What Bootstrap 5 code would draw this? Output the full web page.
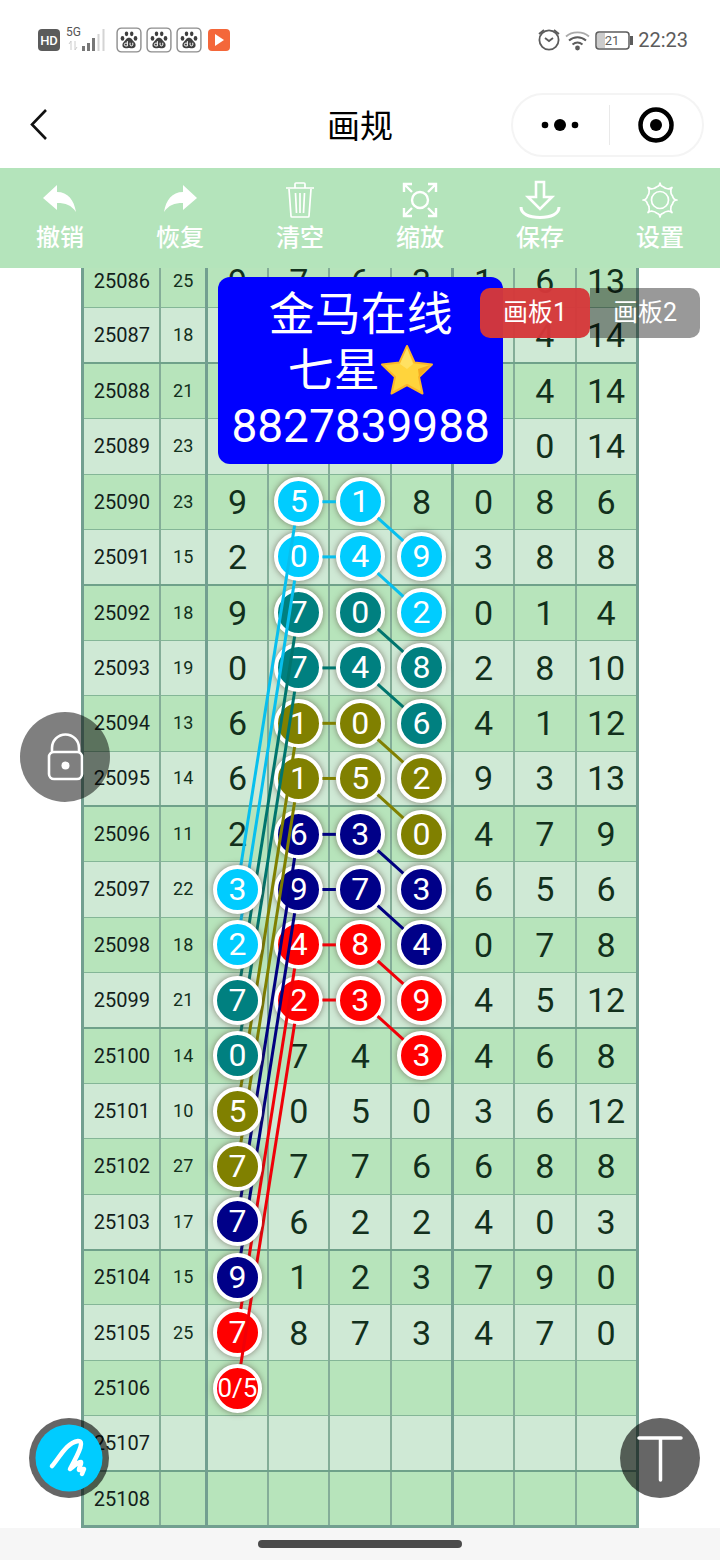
<!DOCTYPE html>
<html lang="zh-CN">
<head>
<meta charset="utf-8">
<meta name="viewport" content="width=device-width, initial-scale=1">
<title>画规</title>
<link href="https://cdn.jsdelivr.net/npm/bootstrap@5.3.0/dist/css/bootstrap.min.css" rel="stylesheet">
<style>
  body { font-family: Roboto, "Noto Sans CJK SC", sans-serif; background: #fff; color: #000; }
  svg { display: block; }
  button { font-family: inherit; }
  .status-bar { height: 80px; padding: 0 32px 0 38px; color: #5c5c5c; }
  .status-time { font-size: 20px; line-height: 24px; }
  .title-bar { height: 88px; padding: 2px 16px 0; }
  .title-text { font-size: 33px; line-height: 40px; font-weight: 400; padding-top: 4px; }
  .side-slot { width: 193px; }
  .capsule { height: 64px; border: 2px solid #f4f4f4; border-radius: 32px; }
  .capsule-rule { width: 1px; height: 40px; background: #e9e9e9; }
  .plain-btn { border: 0; background: none; padding: 0; color: inherit; }
  .tool-bar { height: 100px; background: #b4e4bb; }
  .tool-bar button { color: #fff; font-size: 24px; line-height: 28px; font-weight: 500; flex: 1 1 0; padding-bottom: 4px; gap: 4px; }
  .stage { min-height: 0; }
  .sheet { width: 77.4%; margin-top: -17px; }
  .draw-grid { table-layout: fixed; border-collapse: collapse; color: #12301c; font-size: 34px; line-height: 40px; border: 3px solid #729f90; }
  .draw-grid td, .draw-grid th { padding: 0; font-weight: 400; border: 1px solid #84b697; border-right: 2px solid #84ad98; border-left: 2px solid #84ad98; }
  .draw-grid tr { background: #cfe9d5; height: 55px; }
  .draw-grid tr:nth-child(odd) { background: #b7e4bb; }
  .draw-grid tr:nth-child(4n+2) > * { border-bottom: 2px solid #6fa18a; }
  .draw-grid .edge { border-right: 3px solid #729f90; }
  .draw-grid .issue { width: 14%; font-size: 20px; color: #12201a; }
  .draw-grid .total { width: 8.3%; font-size: 18px; }
  .chip { width: 49px; height: 49px; margin: -4px auto; border: 4px solid #fff; border-radius: 50%; color: #fff; font-size: 32px; line-height: 41px; position: relative; z-index: 1; box-shadow: 0 0 6px rgba(80,60,50,.6); overflow: hidden; }
  .chip.over { z-index: 3; }
  .chip.tight { font-size: 26px; }
  .links { z-index: 2; pointer-events: none; fill: none; stroke-width: 3; }
  .c-sky { background: #00ccff; } .c-teal { background: #008080; } .c-olive { background: #808000; }
  .c-navy { background: #000088; } .c-red { background: #ff0000; }
  .note { left: 30.3%; top: 9px; width: 285px; padding: 9px 0 10px; background: #0000ff; color: #fff; border-radius: 12px; font-size: 46px; line-height: 56px; z-index: 4; }
  .boards { right: 20px; top: 20px; z-index: 5; }
  .boards button { width: 110px; height: 50px; border: 0; color: #fff; font-size: 25px; line-height: 30px; background: rgba(0,0,0,.4); border-radius: 0 10px 10px 0; padding: 0; }
  .boards .active { background: rgba(213,56,58,.97); border-radius: 10px; }
  .round { z-index: 5; border: 0; border-radius: 50%; padding: 0; width: 80px; height: 80px; }
  .round-lock { width: 90px; height: 90px; left: 20px; top: 444px; background: rgba(0,0,0,.5); }
  .round-pen { left: 29px; bottom: 30px; background: rgba(0,0,0,.6); }
  .round-text { right: 20px; bottom: 30px; background: rgba(0,0,0,.6); }
  .home-bar { height: 32px; background: #f6f6f6; }
  .home-pill { width: 204px; height: 8px; border-radius: 4px; background: #4b4b4b; }
</style>
</head>
<body class="d-flex flex-column vh-100 overflow-hidden">

<svg class="d-none">
  <symbol id="paw" viewBox="0 0 24 24">
    <rect x="1" y="1" width="22" height="22" rx="4" fill="#fff" stroke="#8d8d8d" stroke-width="1.3"/>
    <g fill="#3f3f3f"><ellipse cx="6" cy="10.600" rx="1.700" ry="2.200"/><ellipse cx="9.700" cy="6.300" rx="1.600" ry="2.200"/><ellipse cx="14.500" cy="6.300" rx="1.600" ry="2.200"/><ellipse cx="18" cy="10.600" rx="1.700" ry="2.200"/>
    <path d="M12 10c-2.500 0-3 2.200-4.600 3.600-2.600 2.400-1.500 6 1.400 6 1.500 0 2-.3 3.200-.3s1.800.3 3.200.3c3 0 4-3.600 1.400-6C15 12.200 14.500 10 12 10z"/></g>
    <path d="M10.500 13v4.500h-1.500a1.300 1.300 0 010-2.600h1.500M13 14.500v2c0 1.300 2.500 1.300 2.500 0v-2" fill="none" stroke="#fff" stroke-width=".9"/>
  </symbol>
</svg>

<header class="status-bar d-flex align-items-center justify-content-between flex-shrink-0">
  <div class="d-flex align-items-center">
    <svg width="70" height="26" viewBox="0 0 70 26">
      <rect x="0" y="2" width="22" height="22" rx="4" fill="#5b5b5b"/>
      <text x="11" y="18" font-size="13" font-weight="500" fill="#fff" text-anchor="middle">HD</text>
      <text x="28" y="9" font-size="12" fill="#555">5G</text>
      <path d="M33 14v9M33 14l-2 3M37 14v9M37 23l2-3" stroke="#ccc" fill="none"/>
      <path d="M45.500 19v5M50.500 16v8M55.500 11v13" stroke="#777" stroke-width="3"/>
      <path d="M60.500 7v17M65.500 2v22" stroke="#d4d4d4" stroke-width="2"/>
    </svg>
    <svg class="ms-2" width="26" height="26"><use href="#paw"/></svg>
    <svg class="ms-1" width="26" height="26"><use href="#paw"/></svg>
    <svg class="ms-1" width="26" height="26"><use href="#paw"/></svg>
    <svg class="ms-1" width="26" height="26" viewBox="0 0 26 26"><rect x="2" y="2" width="22" height="22" rx="4" fill="#f4673a"/><path d="M9 7l9 6-9 6z" fill="#fff"/></svg>
  </div>
  <div class="d-flex align-items-center">
    <svg width="97" height="26" viewBox="0 0 97 26" fill="none" stroke="#5c5c5c" stroke-width="1.800">
      <circle cx="12" cy="13" r="9.600"/><path d="M8 11l4 3 4-3M2 7l5-4M22 7l-5-4"/>
      <path d="M29 9.500c6-5.500 17-5.500 23 0" stroke="#aaa"/><path d="M32 13.500c5-4.500 12-4.500 17 0M35.500 17.500c3-2.500 7-2.500 10 0" stroke-width="2"/><circle cx="40.500" cy="21" r="1.500" fill="#5c5c5c"/>
      <rect x="60" y="6" width="8" height="15" fill="#ccc" stroke="none"/>
      <rect x="59" y="5" width="33" height="17" rx="3" stroke-width="1.500"/><path d="M94.500 9v9" stroke-width="3"/>
      <text x="75" y="18" font-size="13" fill="#5c5c5c" stroke="none" text-anchor="middle">21</text>
    </svg>
    <span class="status-time ms-1">22:23</span>
  </div>
</header>

<nav class="title-bar d-flex align-items-center justify-content-between flex-shrink-0">
  <div class="side-slot"><button class="plain-btn ps-2 pt-1" aria-label="返回"><svg width="30" height="36" viewBox="0 0 30 36" fill="none" stroke="#111" stroke-width="2.600"><path d="M22 4L8 18.500 22 33"/></svg></button></div>
  <h1 class="title-text m-0">画规</h1>
  <div class="side-slot capsule d-flex align-items-center">
    <button class="plain-btn flex-fill d-flex justify-content-center" aria-label="更多"><svg width="40" height="14" viewBox="0 0 40 14"><circle cx="4" cy="7" r="3.300"/><circle cx="19" cy="7" r="6"/><circle cx="34" cy="7" r="3.300"/></svg></button>
    <span class="capsule-rule"></span>
    <button class="plain-btn flex-fill d-flex justify-content-center" aria-label="关闭"><svg width="36" height="36" viewBox="0 0 36 36"><circle cx="18" cy="18" r="15.500" fill="none" stroke="#000" stroke-width="4.500"/><circle cx="18" cy="18" r="6"/></svg></button>
  </div>
</nav>

<div class="tool-bar d-flex flex-shrink-0" role="toolbar">
  <button class="plain-btn d-flex flex-column align-items-center justify-content-center"><svg width="40" height="40" viewBox="0 0 40 40" fill="#fff"><path d="M3 18L17 5v7c11 0 17 8 19 20-5-7-10-9-19-9v7z"/></svg>撤销</button>
  <button class="plain-btn d-flex flex-column align-items-center justify-content-center"><svg width="40" height="40" viewBox="0 0 40 40" fill="#fff"><path d="M37 18L23 5v7C12 12 6 20 4 32c5-7 10-9 19-9v7z"/></svg>恢复</button>
  <button class="plain-btn d-flex flex-column align-items-center justify-content-center"><svg width="40" height="40" viewBox="0 0 40 40" fill="none" stroke="#fff" stroke-width="1.700"><path d="M6 8h28M15 8V4q0-1 1-1h8q1 0 1 1v4M9 9l2 27q0 1 1 1h16q1 0 1-1l2-27M15.500 13l1 20M20 13v20M24.500 13l-1 20"/></svg>清空</button>
  <button class="plain-btn d-flex flex-column align-items-center justify-content-center"><svg width="40" height="40" viewBox="0 0 40 40" fill="none" stroke="#fff" stroke-width="2.400"><circle cx="20" cy="20" r="8"/><path d="M4 12V4h8M4 4l8 8M28 4h8v8M36 4l-8 8M4 28v8h8M4 36l8-8M36 28v8h-8M36 36l-8-8"/></svg>缩放</button>
  <button class="plain-btn d-flex flex-column align-items-center justify-content-center"><svg width="44" height="40" viewBox="0 0 44 40" fill="none" stroke="#fff" stroke-width="2.600"><path d="M18 2h8v15h8L22 29 10 17h8z"/><path d="M3 27c0 7 8 10.500 19 10.500S41 34 41 27" stroke-width="3"/></svg>保存</button>
  <button class="plain-btn d-flex flex-column align-items-center justify-content-center"><svg width="40" height="40" viewBox="0 0 40 40" fill="none" stroke="#fff" stroke-width="1.700" stroke-linejoin="round"><circle cx="20" cy="20" r="8.500"/><path d="M16.500 7q3.500-1 3.500-4 0 3 3.500 4 2 1.500 3 1.500 3 1 5.500-1-2 2.500-1 5.500 0 1 1.500 3 1 4 4.500 4-3.500 0-4.500 4-1.500 2-1.500 3-1 3 1 5.500-2.500-2-5.500-1-1 0-3 1.500-3.500 1-3.500 4 0-3-3.500-4-2-1.500-3-1.500-3-1-5.500 1 2-2.500 1-5.500 0-1-1.500-3-1-4-4.500-4 3.500 0 4.500-4 1.500-2 1.500-3 1-3-1-5.500 2.500 2 5.500 1 1 0 3-1.500z"/></svg>设置</button>
</div>

<main class="stage position-relative flex-grow-1 d-flex justify-content-center overflow-hidden">
  <div class="sheet position-relative">
    <table class="draw-grid w-100 h-100 text-center align-middle"><tbody id="rows"></tbody></table>
    <svg id="links" class="links position-absolute top-0 start-0 w-100 h-100"></svg>
  </div>

  <div class="note position-absolute text-center">
    <div>金马在线</div>
    <div class="d-flex justify-content-center align-items-center">七星<svg width="54" height="54" viewBox="0 0 54 54"><path d="M27 3l7.500 16.500L52 21.500 39 34l3.500 16.500L27 42l-15.500 8.500L15 34 2 21.500l17.500-2z" fill="#ffd43c" stroke="#fbb52a" stroke-width="2" stroke-linejoin="round"/><path d="M27 5l6 16-6 5-7-5z" fill="#ffe162"/><path d="M50 22L38 26l1 8z" fill="#f5ab1f"/></svg></div>
    <div>8827839988</div>
  </div>

  <div class="boards position-absolute d-flex"><button class="active">画板1</button><button>画板2</button></div>

  <button class="round round-lock position-absolute" aria-label="锁定"><svg width="90" height="90" viewBox="0 0 90 90" fill="none" stroke="#fff" stroke-width="2.600"><rect x="29" y="40" width="33" height="27" rx="5"/><path d="M32 40v-4a13.500 13.500 0 0127 0v4"/><circle cx="45.500" cy="53.500" r="4" fill="#fff" stroke="none"/></svg></button>
  <button class="round round-pen position-absolute" aria-label="画笔"><svg width="80" height="80" viewBox="0 0 80 80"><circle cx="40" cy="40" r="33.500" fill="#00ccff"/><path d="M23 48C31 39 37 25 49 23c6 0 3 8-8 28 5-3 7-7 11-7 1 2-3 7-2 8l5-1-2 5" fill="none" stroke="#fff" stroke-width="4.500" stroke-linecap="round" stroke-linejoin="round"/></svg></button>
  <button class="round round-text position-absolute" aria-label="文字"><svg width="80" height="80" viewBox="0 0 80 80" fill="none" stroke="#fff" stroke-width="3.500" stroke-linecap="round"><path d="M19 20h42M40.500 20v42"/></svg></button>
</main>

<footer class="home-bar d-flex align-items-center justify-content-center flex-shrink-0"><span class="home-pill"></span></footer>

<script src="https://cdn.jsdelivr.net/npm/bootstrap@5.3.0/dist/js/bootstrap.bundle.min.js"></script>
<script>
  // issue, sum, then the seven digits of each draw
  const draws = [
    [25086,25,9,7,6,3,1,6,13],[25087,18,'','','','','',4,14],[25088,21,'','','','','',4,14],[25089,23,'','','','','',0,14],
    [25090,23,9,5,1,8,0,8,6],[25091,15,2,0,4,9,3,8,8],[25092,18,9,7,0,2,0,1,4],[25093,19,0,7,4,8,2,8,10],
    [25094,13,6,1,0,6,4,1,12],[25095,14,6,1,5,2,9,3,13],[25096,11,2,6,3,0,4,7,9],[25097,22,3,9,7,3,6,5,6],
    [25098,18,2,4,8,4,0,7,8],[25099,21,7,2,3,9,4,5,12],[25100,14,0,7,4,3,4,6,8],[25101,10,5,0,5,0,3,6,12],
    [25102,27,7,7,7,6,6,8,8],[25103,17,7,6,2,2,4,0,3],[25104,15,9,1,2,3,7,9,0],[25105,25,7,8,7,3,4,7,0],
    [25106,'','0/5'],[25107,''],[25108,'']
  ];
  const colors = { sky: '#08bfee', teal: '#00756e', olive: '#808000', navy: '#000080', red: '#f00008' };
  const names = Object.keys(colors);
  // each path: two chips in its row, one a row lower, one seven rows lower in the first column
  const paths = Array.from({ length: 10 }, (_, i) => ({ row: 4 + i, color: names[i >> 1] }));
  const marks = {};
  paths.forEach(p => [[0,3],[0,4],[1,5],[7,2]].forEach(([d, c]) => marks[(p.row + d) + '-' + c] = p.color));

  const body = document.getElementById('rows');
  draws.forEach((d, r) => {
    const tr = body.insertRow();
    for (let c = 0; c < 9; c++) {
      const cell = document.createElement(c ? 'td' : 'th');
      cell.className = ['issue', 'total edge', '', '', '', 'edge'][c] || '';
      const color = marks[r + '-' + c], text = d[c] ?? '';
      if (color) {
        const chip = document.createElement('div');
        chip.id = 'n' + r + '-' + c;
        chip.className = 'chip c-' + color + (c === 2 && r !== 19 ? ' over' : '') + (String(text).length > 1 ? ' tight d-flex justify-content-center' : '');
        chip.textContent = text;
        cell.append(chip);
      } else cell.textContent = text;
      tr.append(cell);
    }
  });

  function link() {
    const svg = document.getElementById('links'), o = svg.getBoundingClientRect(), R = 24;
    const mid = (r, c) => { const b = document.getElementById('n' + r + '-' + c).getBoundingClientRect(); return [b.x + b.width / 2 - o.x, b.y + b.height / 2 - o.y]; };
    svg.innerHTML = paths.map(p => {
      const a = mid(p.row, 3), b = mid(p.row, 4), c = mid(p.row + 1, 5), e = mid(p.row + 7, 2);
      const pairs = [[b, c], [a, e]];
      if (p.row !== 6) pairs.push([a, b]);
      return pairs.map(([s, t]) => {
        const dx = t[0] - s[0], dy = t[1] - s[1], n = Math.hypot(dx, dy), u = dx / n * R, v = dy / n * R;
        return `<line x1="${s[0] + u}" y1="${s[1] + v}" x2="${t[0] - u}" y2="${t[1] - v}" stroke="${colors[p.color]}"/>`;
      }).join('');
    }).join('');
  }
  link();
  addEventListener('resize', link);
</script>
</body>
</html>
